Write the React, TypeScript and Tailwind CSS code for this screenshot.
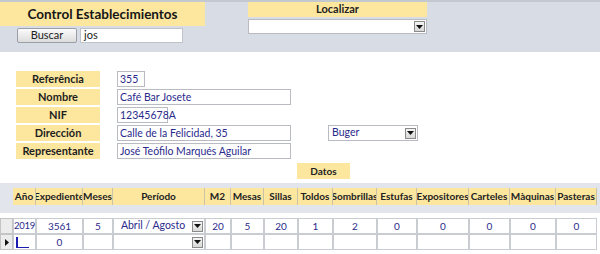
import React from "react";

const YEL = "bg-[#fde79f]";

function Arrow() {
  return (
    <div className="w-[11px] h-[11px] border border-[#8a8a8a] bg-gradient-to-b from-[#f4f4f4] to-[#d8d8d8] flex items-center justify-center">
      <svg width="7" height="4" viewBox="0 0 7 4"><path d="M0 0 L7 0 L3.5 4 Z" fill="#111" /></svg>
    </div>
  );
}

const cols: { n: string; w: number }[] = [
  { n: "Año", w: 23 },
  { n: "Expediente", w: 47 },
  { n: "Meses", w: 30 },
  { n: "Período", w: 92 },
  { n: "M2", w: 26 },
  { n: "Mesas", w: 33 },
  { n: "Sillas", w: 34 },
  { n: "Toldos", w: 35 },
  { n: "Sombrillas", w: 44 },
  { n: "Estufas", w: 40 },
  { n: "Expositores", w: 52 },
  { n: "Carteles", w: 41 },
  { n: "Màquinas", w: 46 },
  { n: "Pasteras", w: 41 },
];

const row1 = ["2019", "3561", "5", "Abril / Agosto", "20", "5", "20", "1", "2", "0", "0", "0", "0", "0"];
const row2 = ["", "0", "", "", "", "", "", "", "", "", "", "", "", ""];

function Field({ label, value, w }: { label: string; value: string; w: number }) {
  return (
    <div className="flex h-[16px] items-stretch">
      <div className={`${YEL} w-[84px] flex items-center justify-center text-[11px] font-bold text-[#1e1e1e]`}>{label}</div>
      <div className="w-[17px]" />
      <div
        className="bg-white border border-[#b8bcc2] flex items-center px-[2px] text-[10.5px] text-[#2a2a8c] leading-none whitespace-nowrap"
        style={{ width: w }}
      >
        {value}
      </div>
    </div>
  );
}

export default function App() {
  return (
    <div className="w-[600px] h-[254px] bg-white overflow-hidden" style={{ fontFamily: "Lato, 'Liberation Sans', sans-serif" }}>
      {/* header band */}
      <div className="h-[52px] bg-[#d7dce5] border-t-2 border-[#c4c8cf] flex">
        <div className="w-[205px] flex flex-col">
          <div className={`${YEL} h-[24px] flex items-center justify-center text-[13.5px] font-bold text-[#161616]`}>
            Control Establecimientos
          </div>
          <div className="flex mt-[2px] ml-[17px] gap-[3px]">
            <div className="w-[60px] h-[15px] border border-[#9a9ea6] rounded-[2px] bg-gradient-to-b from-[#fbfbfb] to-[#dcdcdc] flex items-center justify-center text-[11px] text-[#222]">
              Buscar
            </div>
            <div className="w-[103px] h-[15px] bg-white border border-[#c0c4ca] flex items-center px-[3px] text-[11px] text-[#222]">
              jos
            </div>
          </div>
        </div>
        <div className="ml-[43px] w-[179px] flex flex-col">
          <div className={`${YEL} h-[15px] flex items-center justify-center text-[11px] font-bold text-[#222]`}>Localizar</div>
          <div className="mt-[2px] h-[15px] bg-white border border-[#b8bcc2] flex items-center justify-end pr-[1px]">
            <Arrow />
          </div>
        </div>
      </div>

      {/* form */}
      <div className="mt-[19px] ml-[16px] flex">
        <div className="flex flex-col gap-[2px]">
          <Field label="Referência" value="355" w={28} />
          <Field label="Nombre" value="Café Bar Josete" w={174} />
          <Field label="NIF" value="12345678A" w={51} />
          <Field label="Dirección" value="Calle de la Felicidad, 35" w={174} />
          <Field label="Representante" value="José Teófilo Marqués Aguilar" w={174} />
        </div>
        <div className="ml-[37px] mt-[54px] w-[90px] h-[16px] bg-white border border-[#b8bcc2] flex items-center justify-between pl-[3px] pr-[1px] text-[10.5px] text-[#2a2a8c]">
          Buger
          <Arrow />
        </div>
      </div>

      <div className="mt-[4px] ml-[297px] w-[53px] h-[16px] bg-[#fde79f] flex items-center justify-center text-[10px] font-bold text-[#222]">
        Datos
      </div>

      {/* grid header */}
      <div className="mt-[4px] h-[30px] bg-[#e2e6ec] flex items-start pt-[5px]">
        <div className="w-[13px]" />
        {cols.map((c) => (
          <div
            key={c.n}
            className="h-[17px] bg-[#fde79f] border-r border-[#c9c3a8] flex items-center justify-center overflow-hidden whitespace-nowrap text-[10px] font-bold text-[#222]"
            style={{ width: c.w }}
          >
            {c.n}
          </div>
        ))}
      </div>

      {/* rows */}
      <div className="mt-[5px] flex flex-col">
        {[row1, row2].map((r, ri) => (
          <div key={ri} className="flex h-[16px]">
            <div className="w-[13px] bg-[#ececec] border border-[#c4c4c4] flex items-center justify-center">
              {ri === 1 && (
                <svg width="4" height="7" viewBox="0 0 4 7"><path d="M0 0 L4 3.5 L0 7 Z" fill="#111" /></svg>
              )}
            </div>
            {cols.map((c, ci) => (
              <div
                key={ci}
                className="relative bg-white border border-[#c9ccd1] flex items-center justify-center text-[10px] text-[#2a2a8c] whitespace-nowrap"
                style={{ width: c.w }}
              >
                {ci === 3 ? (
                  <div className="flex w-full items-center justify-between">
                    <span className="flex-1 text-center text-[10.5px]">{r[ci]}</span>
                    <div className="mr-[1px]"><Arrow /></div>
                  </div>
                ) : ci === 0 ? (
                  <span className="text-[9.5px] tracking-[-0.2px]">{r[ci]}</span>
                ) : (
                  r[ci]
                )}
                {ri === 1 && ci === 0 && (
                  <div className="absolute left-[2px] top-[2px] w-[13px] h-[11px] border-l-2 border-b border-[#1c1cb0]" />
                )}
              </div>
            ))}
          </div>
        ))}
      </div>
    </div>
  );
}
